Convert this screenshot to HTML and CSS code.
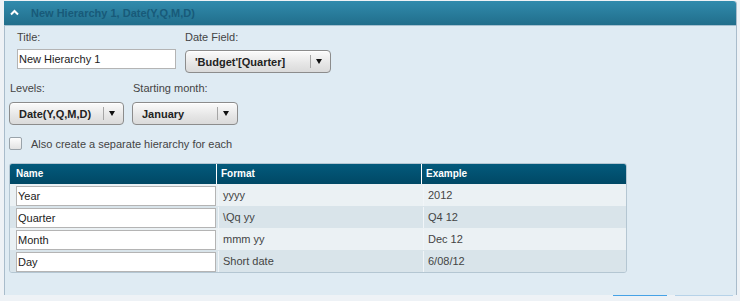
FILE: index.html
```html
<!DOCTYPE html>
<html>
<head>
    <meta http-equiv="Content-Type" content="text/html; charset=utf-8" />
    <title>Hierarchy</title>
    <link rel="stylesheet" href="styles.css">
</head>
<body>
<div class="panel">
    <div class="panel-head">
        <svg class="chev" width="9" height="7" viewBox="0 0 9 7"><polyline points="1,5.5 4.5,2 8,5.5" fill="none" stroke="#fff" stroke-width="2"/></svg>
        <span class="panel-title">New Hierarchy 1, Date(Y,Q,M,D)</span>
    </div>
    <div class="panel-body">
        <div class="row row-top">
            <div class="field">
                <div class="lbl">Title:</div>
                <input class="txt txt-title" type="text" value="New Hierarchy 1">
            </div>
            <div class="field">
                <div class="lbl">Date Field:</div>
                <div class="select s-date"><span class="sel-text">'Budget'[Quarter]</span><span class="sel-btn"></span></div>
            </div>
        </div>
        <div class="row row-mid">
            <div class="field">
                <div class="lbl">Levels:</div>
                <div class="select s-levels"><span class="sel-text">Date(Y,Q,M,D)</span><span class="sel-btn"></span></div>
            </div>
            <div class="field">
                <div class="lbl">Starting month:</div>
                <div class="select s-month"><span class="sel-text">January</span><span class="sel-btn"></span></div>
            </div>
        </div>
        <div class="check-row">
            <span class="check"></span>
            <span class="check-lbl">Also create a separate hierarchy for each</span>
        </div>
        <div class="grid">
            <div class="g-head">
                <div class="c-name">Name</div>
                <div class="c-fmt">Format</div>
                <div class="c-ex">Example</div>
            </div>
            <div class="g-row">
                <div class="c-name"><input class="txt txt-cell" type="text" value="Year"></div>
                <div class="c-fmt"><span>yyyy</span></div>
                <div class="c-ex"><span>2012</span></div>
            </div>
            <div class="g-row alt">
                <div class="c-name"><input class="txt txt-cell" type="text" value="Quarter"></div>
                <div class="c-fmt"><span>\Qq yy</span></div>
                <div class="c-ex"><span>Q4 12</span></div>
            </div>
            <div class="g-row">
                <div class="c-name"><input class="txt txt-cell" type="text" value="Month"></div>
                <div class="c-fmt"><span>mmm yy</span></div>
                <div class="c-ex"><span>Dec 12</span></div>
            </div>
            <div class="g-row alt">
                <div class="c-name"><input class="txt txt-cell" type="text" value="Day"></div>
                <div class="c-fmt"><span>Short date</span></div>
                <div class="c-ex"><span>6/08/12</span></div>
            </div>
        </div>
    </div>
</div>
<div class="foot">
    <span class="btn-top btn-ok"></span>
    <span class="btn-top btn-cancel"></span>
</div>
</body>
</html>
```

FILE: styles.css
```css
*{ margin: 0; padding: 0; box-sizing: border-box;}
body{ background: #eef2f6; font-family: "Liberation Sans", Arial, sans-serif; font-size: 11px; color: #444;}

.panel{ width: 733px; margin: 1px 0 0 4px; background: #dfebf3; border-left: 1px solid #a9bccb; border-right: 1px solid #a9bccb; border-top-right-radius: 3px;}
.panel-head{ height: 25px; display: flex; align-items: center; background: linear-gradient(#318bad, #216e8b); border-bottom: 1px solid #a4c0d0; border-top-right-radius: 3px; margin-left: -1px;}
.chev{ margin: 0 0 2px 6px;}
.panel-title{ margin-left: 12px; font-weight: bold; font-size: 11px; color: #185a79;}

.panel-body{ padding: 5px 0 22px 4px;}
.row{ display: flex; gap: 9px;}
.row-top{ margin-left: 8px;}
.row-mid{ margin-top: 9px; gap: 8px;}
.lbl{ height: 13px; line-height: 13px; color: #444;}
.row-mid .lbl{ margin-left: 1px;}

.txt{ display: block; font-family: "Liberation Sans", Arial, sans-serif; font-size: 11px; color: #222; background: #fff; border: 1px solid #b4b4b4; padding: 0 0 0 1px; outline: none;}
.txt-title{ width: 159px; height: 20px; margin-top: 5px;}
.txt-cell{ width: 200px; height: 20px;}

.select{ display: flex; align-items: center; height: 23px; border: 1px solid #8c8c8c; border-radius: 4px; background: linear-gradient(#fbfbfb, #e6e6e6 60%, #dadada); box-shadow: inset 0 1px 0 #fff; font-weight: bold; color: #222;}
.row-top .select{ margin-top: 6px;}
.row-mid .select{ margin-top: 7px;}
.s-date{ width: 146px;}
.s-levels{ width: 115px;}
.s-month{ width: 106px;}
.sel-text{ flex: 1; padding-left: 9px; white-space: nowrap;}
.sel-btn{ display: flex; align-items: center; width: 20px; height: 100%;}
.sel-btn:before{ content: ""; width: 1px; height: 13px; background: #a6a6a6;}
.sel-btn:after{ content: ""; margin-left: 5px; width: 0; height: 0; border-left: 3.5px solid transparent; border-right: 3.5px solid transparent; border-top: 5px solid #111;}

.check-row{ display: flex; align-items: center; gap: 9px; margin-top: 12px; height: 13px;}
.check{ width: 13px; height: 13px; border: 1px solid #9aa3aa; border-radius: 2px; background: linear-gradient(#fdfdfd, #e2e2e2);}
.check-lbl{ color: #444;}

.grid{ width: 618px; margin-top: 13px; border: 1px solid #b4c6d2; border-radius: 3px; overflow: hidden;}
.g-head, .g-row{ display: grid; grid-template-columns: 206px 205px 205px;}
.g-head{ height: 20px; background: linear-gradient(#035a7c, #004865); color: #fff; font-weight: bold; font-size: 10px; line-height: 20px;}
.g-head .c-name{ padding-left: 6px;}
.g-head .c-fmt, .g-head .c-ex{ border-left: 1px solid #fff; padding-left: 4px;}
.g-row{ height: 22px; background: #ebf1f4;}
.g-row.alt{ background: #d9e4ea;}
.g-row .c-name{ padding: 2px 0 0 6px;}
.g-row .c-fmt, .g-row .c-ex{ display: flex; padding: 1px 0 0 2px;}
.g-row .c-fmt span, .g-row .c-ex span{ flex: 1; line-height: 20px; padding-left: 4px; border-left: 1px solid #f1f5f8;}

.foot{ display: flex; justify-content: flex-end; padding-right: 7px; gap: 8px;}
.btn-top{ width: 54px; height: 1px;}
.btn-ok{ background: #46a2e6;}
.btn-cancel{ width: 58px; background: #b6d2e8;}
```
